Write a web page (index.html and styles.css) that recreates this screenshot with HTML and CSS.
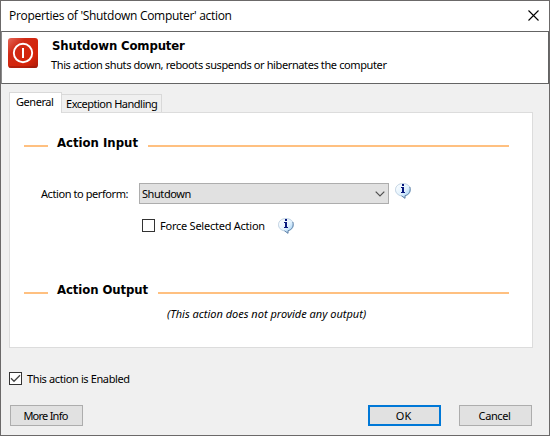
FILE: index.html
```html
<!DOCTYPE html>
<html lang="en">
<head>
<meta charset="utf-8">
<title>Properties of 'Shutdown Computer' action</title>
<link rel="stylesheet" href="styles.css">
</head>
<body>
<svg class="defs" width="0" height="0" aria-hidden="true">
  <defs>
    <linearGradient id="bubble" x1="0" y1="0" x2="1" y2="1">
      <stop offset="0" stop-color="#ffffff"/>
      <stop offset="0.55" stop-color="#e0f1fd"/>
      <stop offset="1" stop-color="#86c2f2"/>
    </linearGradient>
    <linearGradient id="red" x1="0" y1="0" x2="1" y2="1">
      <stop offset="0" stop-color="#e5685a"/>
      <stop offset="0.3" stop-color="#d02a15"/>
      <stop offset="0.75" stop-color="#d52308"/>
      <stop offset="1" stop-color="#a81b0b"/>
    </linearGradient>
    <symbol id="info" viewBox="0 0 16 16">
      <path d="M8 .5C3.700.5.500 3.100.500 6.700c0 3.200 2.400 5.600 6 6.200L10 15.500V12.900c3.300-.7 5.500-3 5.500-6.200C15.500 3.100 12.300.5 8 .5z" fill="url(#bubble)" stroke="#b4c8dc" stroke-width=".8"/>
      <path d="M14.800 4c1.200 4-.8 7.700-4.800 8.700v2.500L6.500 12.800" fill="none" stroke="#5d7fa5" stroke-width=".9"/>
      <path d="M7 1h2v2H7zM6 4h3v5h1v1H6V9h1V5H6z" fill="#07187d"/>
    </symbol>
  </defs>
</svg>
<div class="window">
  <div class="titlebar">
    <span class="caption">Properties of 'Shutdown Computer' action</span>
    <svg class="close" width="11" height="11" viewBox="0 0 11 11"><path d="M.5.5l10 10M10.500.5l-10 10" stroke="#000" stroke-width="1.100" fill="none"/></svg>
  </div>
  <div class="header">
    <svg class="power" width="30" height="30" viewBox="0 0 30 30">
      <rect width="30" height="30" rx="3" fill="url(#red)"/>
      <path d="M1 29h28" stroke="#8e1a0e" stroke-width="1.500" opacity=".6"/>
      <circle cx="15" cy="15" r="9.200" fill="none" stroke="#fff" stroke-width="1.900"/>
      <path d="M15 10v10" stroke="#fff" stroke-width="2"/>
    </svg>
    <div class="heading">
      <div class="title"><span class="t-title">Shutdown Computer</span></div>
      <div class="subtitle"><span class="t-sub">This action shuts down, reboots suspends or hibernates the computer</span></div>
    </div>
  </div>
  <div class="content">
    <div class="tabs">
      <div class="tab active"><span class="t-gen">General</span></div>
      <div class="tab"><span class="t-exc">Exception Handling</span></div>
    </div>
    <div class="page">
      <div class="section"><i class="lead"></i><span class="legend in">Action Input</span><i class="rule"></i></div>
      <div class="row combo-row">
        <span class="label t-perform">Action to perform:</span>
        <div class="combo"><span class="t-shut">Shutdown</span>
          <svg width="10" height="6" viewBox="0 0 10 6"><path d="M.7.700L5 5 9.300.700" fill="none" stroke="#505050" stroke-width="1.200"/></svg>
        </div>
        <svg class="info" width="16" height="16"><use href="#info"/></svg>
      </div>
      <div class="row force-row">
        <span class="box"></span><span class="force-text"><span class="t-force">Force Selected Action</span></span>
        <svg class="info" width="16" height="16"><use href="#info"/></svg>
      </div>
      <div class="section second"><i class="lead"></i><span class="legend out">Action Output</span><i class="rule"></i></div>
      <div class="note"><span class="t-note">(This action does not provide any output)</span></div>
    </div>
    <div class="enabled">
      <span class="box"><svg width="11" height="11" viewBox="0 0 11 11"><path d="M1 5.300l3 3L10 2.200" fill="none" stroke="#444" stroke-width="1.300"/></svg></span>
      <span class="t-enabled">This action is Enabled</span>
    </div>
    <div class="buttons">
      <div class="button"><span class="t-more">More Info</span></div>
      <div class="button ok"><span class="t-ok">OK</span></div>
      <div class="button"><span class="t-cancel">Cancel</span></div>
    </div>
  </div>
</div>
</body>
</html>
```
FILE: styles.css
```css
* { box-sizing: border-box; }
html, body { margin: 0; }
body {
  font-family: "Noto Sans", "Open Sans", sans-serif;
  font-size: 11px;
  line-height: 14px;
  color: #000;
}
span { white-space: nowrap; }
svg { display: block; flex: none; }
.defs { position: absolute; }
.window {
  width: 550px;
  height: 436px;
  border: 1px solid #6b6969;
  background: #f0f0f0;
  display: flex;
  flex-direction: column;
}
.titlebar {
  height: 30px;
  background: #fff;
  display: flex;
  justify-content: space-between;
  padding: 6px 10px 0 8px;
}
.caption { font: 12px/18px "Open Sans", sans-serif; letter-spacing: -0.3px; }
.close { margin-top: 3px; }
.header {
  height: 53px;
  border: 1px solid #646464;
  border-left-color: #8a8a8a;
  background: #fff;
  display: flex;
  padding: 6px 0 0 6px;
}
.heading { margin-left: 13px; }
.title {
  font: bold 13px/16px "DejaVu Sans Condensed", "DejaVu Sans", sans-serif;
  height: 19px;
  padding-left: 1px;
  letter-spacing: -0.14px;
}
.title span, .legend { display: inline-block; }
.subtitle { height: 14px; padding-top: 1px; }
.t-sub { letter-spacing: -0.385px; }
.t-gen { letter-spacing: -0.45px; }
.t-exc { letter-spacing: -0.49px; }
.t-perform { letter-spacing: -0.42px; }
.t-shut { letter-spacing: -0.42px; }
.t-force { letter-spacing: -0.24px; }
.t-enabled { letter-spacing: -0.38px; }
.t-more { letter-spacing: -0.75px; }
.t-cancel { letter-spacing: -0.4px; }
.content { padding: 8px 16px 0 8px; }
.tabs { display: flex; align-items: flex-end; height: 20px; }
.tab {
  width: 100px;
  height: 18px;
  border: 1px solid #d9d9d9;
  border-left: 0;
  border-bottom: 0;
  padding: 2px 0 0 4px;
}
.tab.active {
  width: 53px;
  height: 21px;
  margin-bottom: -1px;
  padding: 2px 0 0 6px;
  border-left: 1px solid #d9d9d9;
  background: #fff;
  z-index: 1;
}
.page {
  height: 236px;
  width: 524px;
  border: 1px solid #dcdcdc;
  background: #fff;
  padding: 22px 23px 0 14px;
}
.section { display: flex; height: 16px; }
.lead, .rule { height: 2px; background: #ffc080; margin-top: 10px; }
.lead { width: 24px; margin-right: 9px; }
.rule { flex: 1; }
.legend { font: bold 13px/16px "DejaVu Sans Condensed", "DejaVu Sans", sans-serif; }
.in { width: 91px; }
.out { width: 101px; letter-spacing: -0.08px; }
.row { display: flex; }
.combo-row { margin-top: 32px; }
.label { width: 98px; margin-left: 17px; padding-top: 4px; }
.combo {
  width: 250px;
  height: 21px;
  border: 1px solid #adadad;
  background: #e1e1e1;
  display: flex;
  justify-content: space-between;
  padding: 3px 3px 0 2px;
}
.combo svg { margin-top: 4px; }
.combo-row .info { margin-left: 6px; }
.force-row { margin: 14px 0 0 118px; height: 16px; }
.box {
  width: 13px;
  height: 13px;
  flex: none;
  border: 1px solid #333;
  background: #fff;
}
.force-row .box { margin-top: 1px; }
.force-text { width: 118px; margin-left: 5px; padding-top: 1px; }
.second { margin-top: 48px; }
.note { padding: 9px 0 0 143px; font-style: italic; }
.enabled { display: flex; margin-top: 24px; height: 13px; }
.enabled > span + span { margin-left: 5px; }
.buttons { display: flex; margin: 20px 0 0 1px; }
.button {
  width: 73px;
  height: 21px;
  border: 1px solid #adadad;
  background: #e1e1e1;
  display: flex;
  justify-content: center;
  padding: 3px 2px 0 0;
}
.button.ok { border: 2px solid #0078d7; padding-top: 2px; margin: 0 18px 0 285px; }
```
